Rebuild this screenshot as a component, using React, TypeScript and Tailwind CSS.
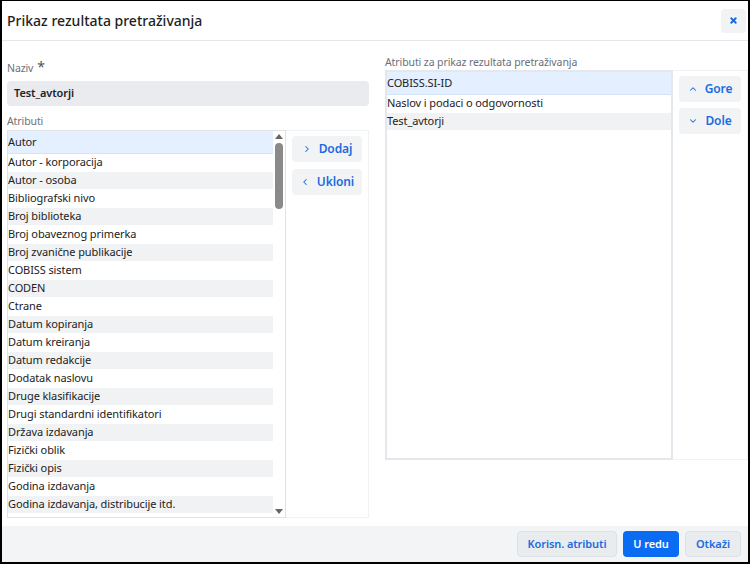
import { ChevronRight, ChevronLeft, ChevronUp, ChevronDown, X } from 'lucide-react';

const attributes = [
  'Autor',
  'Autor - korporacija',
  'Autor - osoba',
  'Bibliografski nivo',
  'Broj biblioteka',
  'Broj obaveznog primerka',
  'Broj zvanične publikacije',
  'COBISS sistem',
  'CODEN',
  'Ctrane',
  'Datum kopiranja',
  'Datum kreiranja',
  'Datum redakcije',
  'Dodatak naslovu',
  'Druge klasifikacije',
  'Drugi standardni identifikatori',
  'Država izdavanja',
  'Fizički oblik',
  'Fizički opis',
  'Godina izdavanja',
  'Godina izdavanja, distribucije itd.',
];

const selected = ['COBISS.SI-ID', 'Naslov i podaci o odgovornosti', 'Test_avtorji'];

function ListRow({ text, index }: { text: string; index: number }) {
  if (index === 0) {
    return (
      <div className="h-[23px] flex items-center bg-[#e4efff] border-b border-[#d5e3f7] text-[#222]">
        {text}
      </div>
    );
  }
  return (
    <div
      className={`h-[18px] flex items-center border-b border-white text-[#222] ${
        index % 2 === 0 ? 'bg-[#f1f2f4]' : 'bg-white'
      }`}
    >
      {text}
    </div>
  );
}

function SideButton({ icon, label, w }: { icon: React.ReactNode; label: string; w: string }) {
  return (
    <button className={`${w} h-[26px] rounded bg-[#f2f3f5] flex items-center justify-center gap-[7px] text-[#1b6be0] font-semibold text-[12px]`}>
      {icon}
      <span>{label}</span>
    </button>
  );
}

export default function App() {
  return (
    <div
      className="w-[750px] h-[564px] bg-white border-t border-l-2 border-r-2 border-b-2 border-black flex flex-col text-[11px] tracking-[-0.1px]"
      style={{ fontFamily: '"Noto Sans", "Open Sans", sans-serif' }}
    >
      {/* header */}
      <div className="h-[40px] shrink-0 flex items-center justify-between pl-[5px] pr-[2px] border-b border-[#e3e6ea]">
        <h1 className="text-[14px] text-[#1e1e1e] font-medium tracking-normal">Prikaz rezultata pretraživanja</h1>
        <button className="w-[25px] h-[24px] rounded bg-[#f2f3f5] flex items-center justify-center text-[#1b6be0]">
          <X size={9} strokeWidth={5} />
        </button>
      </div>

      {/* body */}
      <div className="flex-1 flex gap-[16px] pl-[5px] pt-[14px]">
        {/* left column */}
        <div className="w-[362px] flex flex-col">
          <div className="mt-[6px] h-[16px] flex items-start text-[#6b7077] text-[10.5px]">
            Naziv <span className="ml-[4px] text-[14px] leading-[12px] text-[#555]">*</span>
          </div>
          <div className="mt-[4px] h-[25px] rounded bg-[#e9ebee] flex items-center pl-[7px] text-[11px] font-semibold text-[#222]">
            Test_avtorji
          </div>
          <div className="mt-[8px] h-[16px] text-[#6b7077] text-[10.5px]">Atributi</div>
          <div className="h-[388px] flex">
            <div className="w-[279px] border border-[#dfe2e6] flex">
              <div className="flex-1 overflow-hidden">
                {attributes.map((a, i) => (
                  <ListRow key={a} text={a} index={i} />
                ))}
              </div>
              <div className="w-[12px] relative bg-white">
                <div className="absolute top-[3px] left-[2px] w-0 h-0 border-l-[4px] border-r-[4px] border-b-[5px] border-l-transparent border-r-transparent border-b-[#666]" />
                <div className="absolute top-[12px] left-[2px] w-[8px] h-[66px] rounded-full bg-[#8a8a8a]" />
                <div className="absolute bottom-[3px] left-[2px] w-0 h-0 border-l-[4px] border-r-[4px] border-t-[5px] border-l-transparent border-r-transparent border-t-[#666]" />
              </div>
            </div>
            <div className="flex-1 border border-l-0 border-[#f1f2f4] flex flex-col gap-[7px] px-[6px] pt-[5px]">
              <SideButton w="w-[70px]" icon={<ChevronRight size={10} strokeWidth={2.5} />} label="Dodaj" />
              <SideButton w="w-[70px]" icon={<ChevronLeft size={10} strokeWidth={2.5} />} label="Ukloni" />
            </div>
          </div>
        </div>

        {/* right column */}
        <div className="flex-1 flex flex-col">
          <div className="h-[15px] text-[#6b7077] text-[10.5px] leading-[15px]">
            Atributi za prikaz rezultata pretraživanja
          </div>
          <div className="h-[390px] flex">
            <div className="w-[288px] border-2 border-[#e4e7eb] bg-white">
              {selected.map((s, i) => (
                <ListRow key={s} text={s} index={i} />
              ))}
            </div>
            <div className="flex-1 border border-l-0 border-[#f1f2f4] flex flex-col gap-[6px] px-[6px] pt-[5px]">
              <SideButton w="w-[62px]" icon={<ChevronUp size={10} strokeWidth={2.5} />} label="Gore" />
              <SideButton w="w-[62px]" icon={<ChevronDown size={10} strokeWidth={2.5} />} label="Dole" />
            </div>
          </div>
        </div>
      </div>

      {/* footer */}
      <div className="h-[36px] shrink-0 bg-[#f3f4f6] flex items-center justify-end gap-[6px] pr-[7px]">
        <button className="w-[100px] h-[26px] rounded border border-[#dde1e6] bg-[#e9ecef] text-[#1b6be0] font-semibold text-[11px]">
          Korisn. atributi
        </button>
        <button className="w-[56px] h-[26px] rounded bg-[#0a6cf3] text-white font-semibold text-[11px]">
          U redu
        </button>
        <button className="w-[56px] h-[26px] rounded border border-[#dde1e6] bg-[#e9ecef] text-[#1b6be0] font-semibold text-[11px]">
          Otkaži
        </button>
      </div>
    </div>
  );
}
